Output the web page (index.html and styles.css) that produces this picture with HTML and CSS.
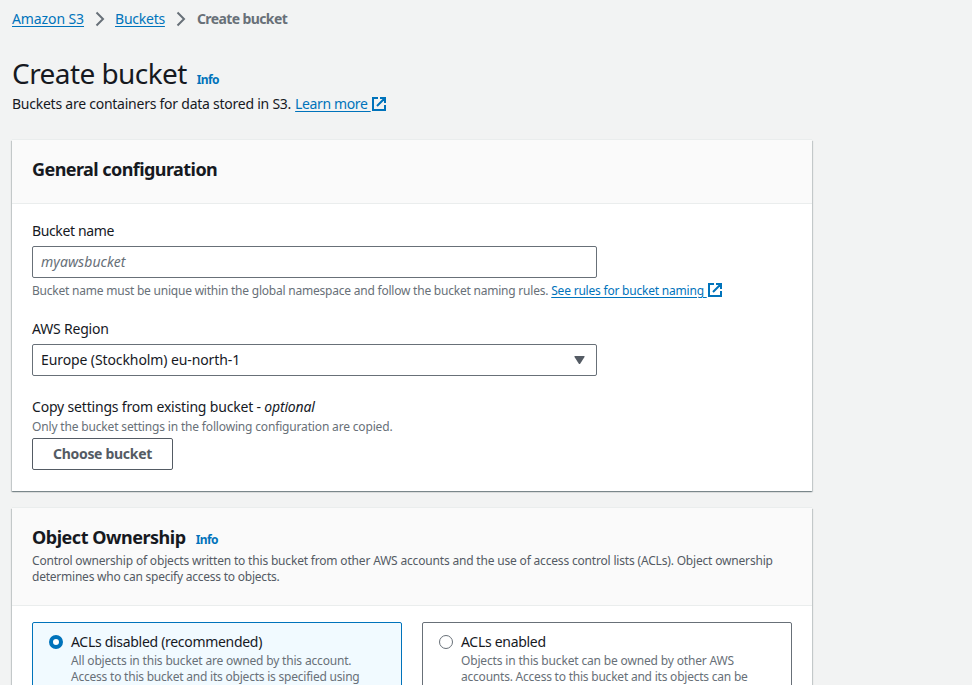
FILE: index.html
```html
<!DOCTYPE html>
<html lang="en">
<head>
<meta charset="utf-8">
<title>Create bucket</title>
<link rel="stylesheet" href="styles.css">
</head>
<body>
<nav class="breadcrumbs">
  <a class="link crumb-s3" href="#">Amazon S3</a>
  <svg class="chevron" viewBox="0 0 10 16"><path d="M1.500 1.500 8 8l-6.500 6.500"/></svg>
  <a class="link crumb-buckets" href="#">Buckets</a>
  <svg class="chevron" viewBox="0 0 10 16"><path d="M1.500 1.500 8 8l-6.500 6.500"/></svg>
  <span class="current">Create bucket</span>
</nav>
<header class="page-header">
  <div class="title-row"><h1>Create bucket</h1><a class="info" href="#">Info</a></div>
  <p class="lead"><span class="lead-text">Buckets are containers for data stored in S3.</span><a class="link learn" href="#">Learn more </a><svg class="external" viewBox="0 0 14 14"><path d="M6 1H1v12h12V8M8 1h5v5M13 1 5 9"/></svg></p>
</header>
<main>
  <section class="panel">
    <div class="panel-head"><h2 class="general">General configuration</h2></div>
    <div class="panel-body">
      <div class="field">
        <label class="label l-name" for="name">Bucket name</label>
        <input class="control" id="name" type="text" placeholder="myawsbucket">
        <p class="hint"><span class="h-name">Bucket name must be unique within the global namespace and follow the bucket naming rules.</span><a class="link rules" href="#">See rules for bucket naming </a><svg class="external" viewBox="0 0 14 14"><path d="M6 1H1v12h12V8M8 1h5v5M13 1 5 9"/></svg></p>
      </div>
      <div class="field">
        <span class="label l-region">AWS Region</span>
        <div class="control select"><span>Europe (Stockholm) eu-north-1</span><svg class="caret" viewBox="0 0 10 8"><path d="M0 0h10v1L5.500 8h-1L0 1z"/></svg></div>
      </div>
      <div class="field">
        <span class="label l-copy">Copy settings from existing bucket - <em>optional</em></span>
        <p class="hint h-copy">Only the bucket settings in the following configuration are copied.</p>
        <button class="button" type="button"><span>Choose bucket</span></button>
      </div>
    </div>
  </section>
  <section class="panel">
    <div class="panel-head ownership">
      <div class="title-row"><h2 class="object">Object Ownership</h2><a class="info" href="#">Info</a></div>
      <p class="description"><span class="d-1">Control ownership of objects written to this bucket from other AWS accounts and the use of access control lists (ACLs). Object ownership</span><br><span class="d-2">determines who can specify access to objects.</span></p>
    </div>
    <div class="panel-body tiles">
      <div class="tile selected">
        <span class="radio"></span>
        <div><div class="label t-off">ACLs disabled (recommended)</div>
        <p class="hint"><span class="o-1">All objects in this bucket are owned by this account.</span><br><span class="o-2">Access to this bucket and its objects is specified using</span></p></div>
      </div>
      <div class="tile">
        <span class="radio"></span>
        <div><div class="label t-on">ACLs enabled</div>
        <p class="hint"><span class="e-1">Objects in this bucket can be owned by other AWS</span><br><span class="e-2">accounts. Access to this bucket and its objects can be</span></p></div>
      </div>
    </div>
  </section>
</main>
</body>
</html>
```
FILE: styles.css
```css
* { box-sizing: border-box; }
html { height: 100%; overflow: hidden; }
body { margin: 0; height: 100%; overflow: hidden; padding: 9px 12px 0; background: #f2f3f3; color: #16191f; font: 14px/20px "Noto Sans", "Open Sans", sans-serif; letter-spacing: -0.3px; white-space: nowrap; }
h1, h2, p { margin: 0; }
.link { color: #0073bb; text-decoration: underline; text-underline-offset: 2px; white-space: pre; }
.breadcrumbs { display: flex; align-items: center; height: 20px; }
.crumb-s3 { letter-spacing: -.1px; }
.crumb-buckets { letter-spacing: -.25px; }
.chevron { width: 10px; height: 16px; margin: 0 10px 0 11px; fill: none; stroke: #687078; stroke-width: 2; }
.current { color: #687078; font-weight: 700; letter-spacing: -.6px; margin-left: 1px; }
.page-header { padding-top: 26px; height: 111px; }
.title-row { display: flex; align-items: baseline; gap: 10px; }
h1 { font-size: 28px; line-height: 36px; font-weight: 400; letter-spacing: -.57px; }
.info { color: #0073bb; font-size: 12px; line-height: 16px; font-weight: 700; letter-spacing: -.6px; text-decoration: none; }
.lead { display: flex; align-items: center; margin-top: 3px; height: 20px; }
.lead-text { letter-spacing: -.245px; }
.learn { margin-left: 4px; letter-spacing: -.38px; }
.external { width: 14px; height: 14px; flex: none; fill: none; stroke: #0073bb; stroke-width: 2; margin-left: 1px; }
.panel { width: 800px; margin-bottom: 17px; background: #fff; box-shadow: 0 1px 1px 0 rgba(0, 28, 36, .3), 1px 1px 1px 0 rgba(0, 28, 36, .15), -1px 1px 1px 0 rgba(0, 28, 36, .15), 0 -1px 0 0 #eaeded; }
.panel-head { height: 64px; padding: 18px 20px; background: #fafafa; border-bottom: 1px solid #eaeded; }
h2 { font-size: 18px; line-height: 22px; font-weight: 700; letter-spacing: -.56px; }
.object { letter-spacing: -.47px; }
.panel-body { padding: 16px 20px 21px; }
.field + .field { margin-top: 18px; }
.label { display: block; line-height: 22px; }
.l-name { letter-spacing: -.37px; }
.l-region { letter-spacing: -.2px; }
.l-copy { letter-spacing: -.18px; }
.control { display: flex; align-items: center; width: 565px; height: 32px; margin-top: 4px; padding: 0 8px 1px; border: 1px solid #687078; border-radius: 2px; background: #fff; font: inherit; letter-spacing: .06px; color: inherit; }
.control::placeholder { color: #687078; opacity: 1; font-style: italic; }
.select { justify-content: space-between; padding: 0 11px 0 8px; letter-spacing: -.1px; }
.caret { width: 11px; height: 8px; fill: #545b64; }
.hint, .description { font-size: 12px; line-height: 16px; color: #687078; }
.field .hint { display: flex; align-items: center; height: 18px; margin-top: 4px; }
.field .hint .external { margin-bottom: 2px; }
.h-name { letter-spacing: -.22px; }
.rules { margin-left: 3px; letter-spacing: -.21px; }
.field .h-copy { height: 16px; margin-top: 1px; letter-spacing: -.165px; }
.field + .field + .field { margin-top: 20px; }
.button { display: block; width: 141px; height: 32px; margin-top: 3px; padding: 0; border: 1px solid #545b64; border-radius: 2px; background: #fff; color: #545b64; font: 700 14px/20px "Noto Sans", sans-serif; letter-spacing: -.3px; }
.ownership { height: 98px; }
.ownership .title-row { height: 26px; }
.description { color: #545b64; margin-top: 1px; }
.d-1 { letter-spacing: -.18px; }
.d-2 { letter-spacing: -.23px; }
.tiles { display: grid; grid-template-columns: 1fr 1fr; gap: 20px; padding-top: 16px; }
.tile { display: flex; gap: 8px; height: 98px; padding: 8px 16px; border: 1px solid #687078; border-radius: 2px; }
.selected { background: #f1faff; border-color: #0073bb; }
.o-1 { letter-spacing: -.17px; }
.o-2 { letter-spacing: -.22px; }
.e-1 { letter-spacing: -.16px; }
.e-2 { letter-spacing: -.22px; }
.radio { flex: none; width: 14px; height: 14px; margin-top: 4px; border: 1px solid #687078; border-radius: 50%; background: #fff; }
.selected .radio { border: 4px solid #0073bb; }
```
